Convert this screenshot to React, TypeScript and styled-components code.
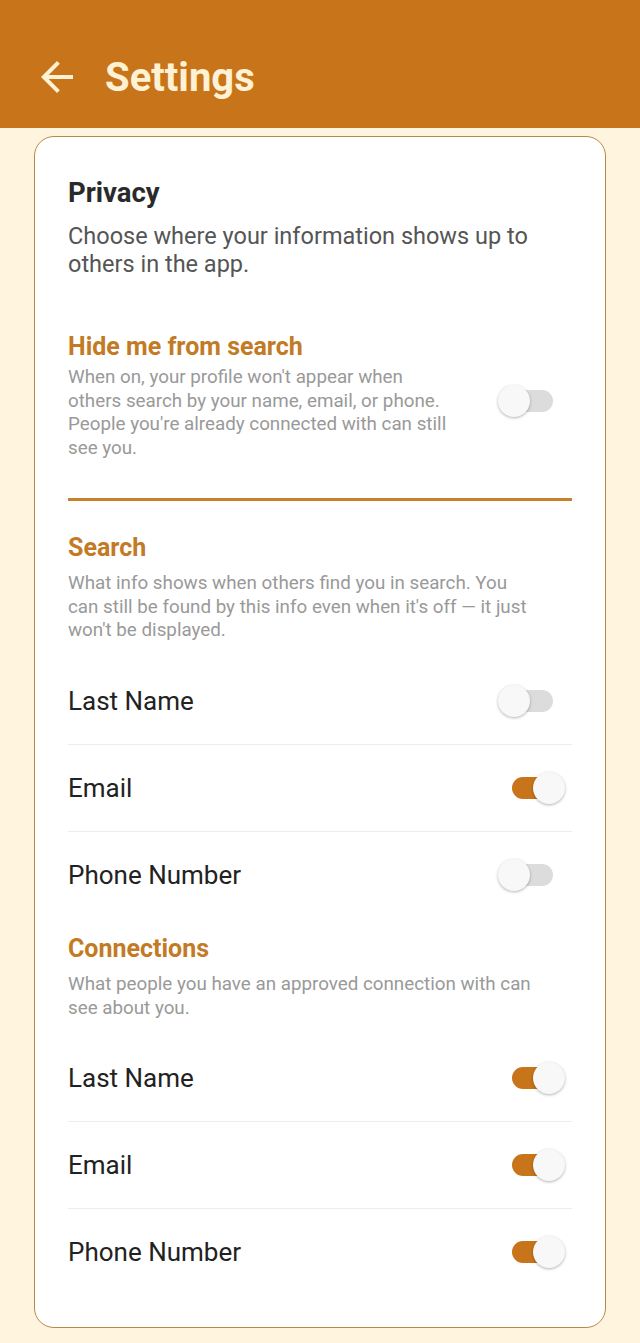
import React, { useState } from 'react';
import { createGlobalStyle, styled } from 'styled-components';

const GlobalStyle = createGlobalStyle`
  html, body {
    margin: 0;
    padding: 0;
    background: #fff4de;
    font-family: Roboto, 'Noto Sans', 'Liberation Sans', sans-serif;
  }
`;

type Field = { key: string; label: string };

const fields: Field[] = [
  { key: 'lastName', label: 'Last Name' },
  { key: 'email', label: 'Email' },
  { key: 'phone', label: 'Phone Number' },
];

function Toggle({ on, onClick }: { on: boolean; onClick: () => void }) {
  return (
    <Switch type="button" $on={on} onClick={onClick} aria-pressed={on}>
      <Track $on={on} />
      <Thumb $on={on} />
    </Switch>
  );
}

function App() {
  const [hidden, setHidden] = useState(false);
  const [search, setSearch] = useState<Record<string, boolean>>({
    lastName: false,
    email: true,
    phone: false,
  });
  const [connections, setConnections] = useState<Record<string, boolean>>({
    lastName: true,
    email: true,
    phone: true,
  });

  return (
    <>
      <GlobalStyle />
      <Header>
        <BackButton type="button" aria-label="Back">
          <svg width="48" height="48" viewBox="0 0 24 24">
            <path
              fill="currentColor"
              d="M20 11H7.83l5.59-5.59L12 4l-8 8 8 8 1.41-1.41L7.83 13H20v-2z"
            />
          </svg>
        </BackButton>
        <Title>Settings</Title>
      </Header>

      <Card>
        <CardTitle>Privacy</CardTitle>
        <CardIntro>Choose where your information shows up to others in the app.</CardIntro>

        <HideRow>
          <HideText>
            <SectionTitle>Hide me from search</SectionTitle>
            <SectionHint>
              When on, your profile won't appear when others search by your name, email, or phone.
              People you're already connected with can still see you.
            </SectionHint>
          </HideText>
          <Toggle on={hidden} onClick={() => setHidden(!hidden)} />
        </HideRow>

        <Rule />

        <Section>
          <SectionTitle>Search</SectionTitle>
          <SectionHint>
            What info shows when others find you in search. You can still be found by this info
            even when it's off — it just won't be displayed.
          </SectionHint>
          <List>
            {fields.map((f) => (
              <Row key={f.key}>
                <RowLabel>{f.label}</RowLabel>
                <Toggle
                  on={search[f.key]}
                  onClick={() => setSearch({ ...search, [f.key]: !search[f.key] })}
                />
              </Row>
            ))}
          </List>
        </Section>

        <Section>
          <SectionTitle>Connections</SectionTitle>
          <SectionHint>What people you have an approved connection with can see about you.</SectionHint>
          <List>
            {fields.map((f) => (
              <Row key={f.key}>
                <RowLabel>{f.label}</RowLabel>
                <Toggle
                  on={connections[f.key]}
                  onClick={() => setConnections({ ...connections, [f.key]: !connections[f.key] })}
                />
              </Row>
            ))}
          </List>
        </Section>
      </Card>
    </>
  );
}

export default App;

const Header = styled.header`
  height: 128px;
  background: #c8741b;
  display: flex;
  align-items: center;
  padding: 26px 0 0 33px;
  box-sizing: border-box;
  gap: 24px;
`;

const BackButton = styled.button`
  border: none;
  background: none;
  padding: 0;
  width: 48px;
  height: 48px;
  color: #fff1d3;
  display: flex;
  cursor: pointer;
`;

const Title = styled.h1`
  margin: 0;
  font-size: 40px;
  font-weight: 700;
  color: #fff1d3;
`;

const Card = styled.main`
  margin: 8px 34px 16px;
  background: #fff;
  border: 1.5px solid #b98845;
  border-radius: 20px;
  padding: 40px 33px 32px;
`;

const CardTitle = styled.h2`
  margin: 0;
  font-size: 27.5px;
  line-height: 32px;
  font-weight: 700;
  color: #2a2a2a;
`;

const CardIntro = styled.p`
  margin: 13px 0 0;
  font-size: 23.5px;
  line-height: 28px;
  color: #555;
`;

const HideRow = styled.div`
  margin-top: 54px;
  display: flex;
  align-items: center;
  justify-content: space-between;
  gap: 16px;
`;

const HideText = styled.div`
  max-width: 385px;
`;

const SectionTitle = styled.h3`
  margin: 0;
  font-size: 25px;
  line-height: 30px;
  font-weight: 700;
  color: #c37a25;
`;

const SectionHint = styled.p`
  margin: 4px 0 0;
  max-width: 466px;
  font-size: 18.8px;
  line-height: 23.7px;
  color: #999;
`;

const Rule = styled.hr`
  margin: 37px 0 32px;
  border: none;
  height: 3px;
  background: #c8802e;
`;

const Section = styled.section`
  & + & {
    margin-top: 16px;
  }

  ${SectionHint} {
    margin-top: 9px;
  }
`;

const List = styled.div`
  margin-top: 15px;
`;

const Row = styled.div`
  height: 86px;
  display: flex;
  align-items: center;
  justify-content: space-between;

  & + & {
    border-top: 1px solid #ececec;
  }
`;

const RowLabel = styled.span`
  font-size: 26px;
  color: #222;
`;

const Switch = styled.button<{ $on: boolean }>`
  position: relative;
  flex: 0 0 auto;
  width: 68px;
  height: 34px;
  margin-right: 6px;
  border: none;
  background: none;
  padding: 0;
  cursor: pointer;

  ${HideRow} > & {
    margin-top: 10px;
  }
`;

const Track = styled.span<{ $on: boolean }>`
  position: absolute;
  left: 14px;
  right: 13px;
  top: 6px;
  height: 22px;
  border-radius: 11px;
  background: ${(p) => (p.$on ? '#c8741b' : '#dcdcdc')};
`;

const Thumb = styled.span<{ $on: boolean }>`
  position: absolute;
  top: 1px;
  left: ${(p) => (p.$on ? '35px' : '0')};
  width: 32px;
  height: 32px;
  border-radius: 50%;
  background: #f8f8f8;
  box-shadow: 0 1px 3px rgba(0, 0, 0, 0.3);
`;
